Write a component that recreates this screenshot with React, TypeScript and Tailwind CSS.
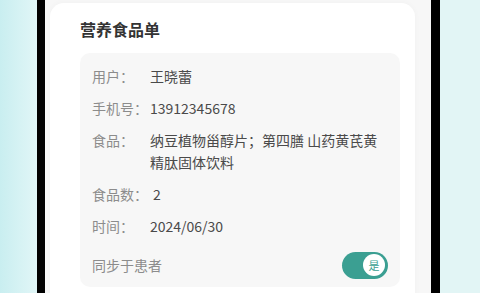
const rows: { label: string; value: string; valueClass?: string }[] = [
  { label: '用户：', value: '王晓蕾' },
  { label: '手机号：', value: '13912345678' },
  { label: '食品：', value: '纳豆植物甾醇片；第四膳 山药黄芪黄精肽固体饮料', valueClass: 'w-[232px]' },
  { label: '食品数：', value: '2', valueClass: 'pl-[3px]' },
  { label: '时间：', value: '2024/06/30' },
]

function Toggle({ on }: { on: boolean }) {
  return (
    <div
      className={
        'flex h-[27px] w-[46px] items-center rounded-full p-[3px] ' +
        (on ? 'justify-end bg-[#3b9f92]' : 'justify-start bg-[#d6d6d6]')
      }
    >
      <div className="flex h-[22px] w-[22px] items-center justify-center rounded-full bg-white text-[11px] leading-none text-[#3b9f92] shadow-[0_0_0_1px_rgba(59,159,146,0.25)]">
        {on ? '是' : '否'}
      </div>
    </div>
  )
}

export default function App() {
  return (
    <div className="flex h-[293px] w-[480px] overflow-hidden font-['Noto_Sans_CJK_SC','Noto_Sans',sans-serif]">
      <div className="w-[37px] shrink-0 bg-gradient-to-r from-[#c9eef0] to-[#e1f6f7]" />
      <div className="w-[8px] shrink-0 bg-black" />
      <div className="flex-1 bg-[#f7f7f7] pl-[5px] pr-[16px] pt-[3px]">
        <div className="h-[320px] rounded-[14px] bg-white pl-[30px] pr-[15px] pt-[14px] shadow-[0_0_6px_rgba(0,0,0,0.03)]">
          <h1 className="text-[16px] font-bold leading-[24px] text-[#333]">营养食品单</h1>
          <div className="mt-[12px] rounded-[10px] bg-[#f7f7f7] pb-[8px] pl-[12px] pr-[12px] pt-[12px]">
            <div className="flex flex-col gap-[10px]">
              {rows.map(r => (
                <div key={r.label} className="flex text-[14px] leading-[22px]">
                  <span className="w-[58px] shrink-0 text-[#8c8c8c]">{r.label}</span>
                  <span className={'text-[#4a4a4a] ' + (r.valueClass ?? '')}>{r.value}</span>
                </div>
              ))}
            </div>
            <div className="mt-[14px] flex h-[28px] items-center justify-between">
              <span className="text-[14px] text-[#8c8c8c]">同步于患者</span>
              <Toggle on />
            </div>
          </div>
        </div>
      </div>
      <div className="w-[9px] shrink-0 bg-black" />
      <div className="w-[40px] shrink-0 bg-[#e2f5f5]" />
    </div>
  )
}
